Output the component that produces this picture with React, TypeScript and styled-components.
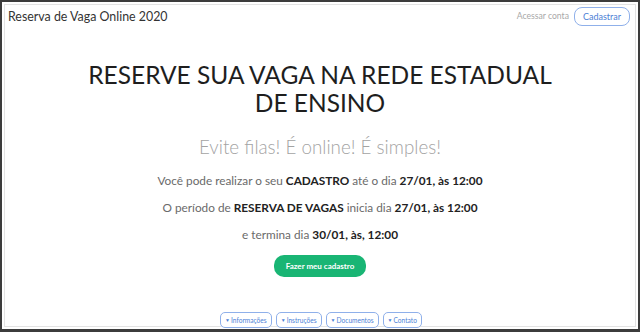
import styled, { createGlobalStyle } from "styled-components";

const GlobalStyle = createGlobalStyle`
  html, body {
    margin: 0;
    padding: 0;
    background: #ffffff;
  }
  body {
    font-family: Lato, "Open Sans", sans-serif;
    color: #333333;
  }
`;

const Frame = styled.div`
  width: 640px;
  height: 332px;
  box-sizing: border-box;
  border: 2px solid #3c3c3c;
  border-bottom-width: 3px;
  padding: 2px;
  overflow: hidden;
  background: #ffffff;
`;

const Page = styled.div`
  height: 100%;
  box-sizing: border-box;
  border: 1px solid #e3e3e3;
  display: flex;
  flex-direction: column;
`;

const NavBar = styled.header`
  display: flex;
  align-items: center;
  justify-content: space-between;
  height: 22px;
  padding: 0 5px 0 3px;
`;

const Brand = styled.div`
  font-size: 12.4px;
  color: #333333;
`;

const NavActions = styled.div`
  display: flex;
  align-items: center;
  gap: 5px;
`;

const NavLink = styled.span`
  font-size: 8.6px;
  color: #a8a8a8;
`;

const OutlineButton = styled.button`
  font-family: inherit;
  font-size: 9px;
  color: #4d7fd6;
  background: #ffffff;
  border: 1px solid #8fb0ea;
  border-radius: 8px;
  height: 19px;
  padding: 0 8px;
`;

const Hero = styled.main`
  flex: 1;
  display: flex;
  flex-direction: column;
  align-items: center;
  text-align: center;
  padding-top: 34px;
`;

const Title = styled.h1`
  margin: 0;
  font-size: 24.5px;
  font-weight: 400;
  line-height: 28px;
  color: #1e1e1e;
`;

const Subtitle = styled.h2`
  margin: 17px 0 7px;
  font-size: 18.8px;
  font-weight: 300;
  line-height: 26px;
  color: #a3a3a3;
`;

const Info = styled.p`
  margin: 0;
  font-size: 11.8px;
  line-height: 27px;
  color: #6a6a6a;
  b {
    font-weight: 700;
    color: #222222;
  }
`;

const CtaButton = styled.button`
  margin-top: 7px;
  font-family: inherit;
  font-size: 8px;
  font-weight: 700;
  color: #ffffff;
  background: #19b574;
  border: none;
  border-radius: 10px;
  height: 22px;
  padding: 0 12px;
`;

const Footer = styled.nav`
  display: flex;
  justify-content: center;
  gap: 4px;
  padding-left: 2px;
  margin-bottom: -2px;
`;

const Pill = styled.button`
  font-family: inherit;
  font-size: 6.6px;
  color: #4d7fd6;
  background: #ffffff;
  border: 1px solid #8fb0ea;
  border-radius: 5px;
  height: 16px;
  padding: 0 4px;
  display: flex;
  align-items: center;
  gap: 1px;
`;

const Caret = styled.span`
  font-size: 5px;
`;

const sections = ["Informações", "Instruções", "Documentos", "Contato"];

export default function App() {
  return (
    <>
      <GlobalStyle />
      <Frame>
        <Page>
          <NavBar>
            <Brand>Reserva de Vaga Online 2020</Brand>
            <NavActions>
              <NavLink>Acessar conta</NavLink>
              <OutlineButton>Cadastrar</OutlineButton>
            </NavActions>
          </NavBar>
          <Hero>
            <Title>
              RESERVE SUA VAGA NA REDE ESTADUAL
              <br />
              DE ENSINO
            </Title>
            <Subtitle>Evite filas! É online! É simples!</Subtitle>
            <Info>
              Você pode realizar o seu <b>CADASTRO</b> até o dia <b>27/01, às 12:00</b>
            </Info>
            <Info>
              O período de <b>RESERVA DE VAGAS</b> inicia dia <b>27/01, às 12:00</b>
            </Info>
            <Info>
              e termina dia <b>30/01, às, 12:00</b>
            </Info>
            <CtaButton>Fazer meu cadastro</CtaButton>
          </Hero>
          <Footer>
            {sections.map((s) => (
              <Pill key={s}>
                <Caret>▼</Caret>
                {s}
              </Pill>
            ))}
          </Footer>
        </Page>
      </Frame>
    </>
  );
}
